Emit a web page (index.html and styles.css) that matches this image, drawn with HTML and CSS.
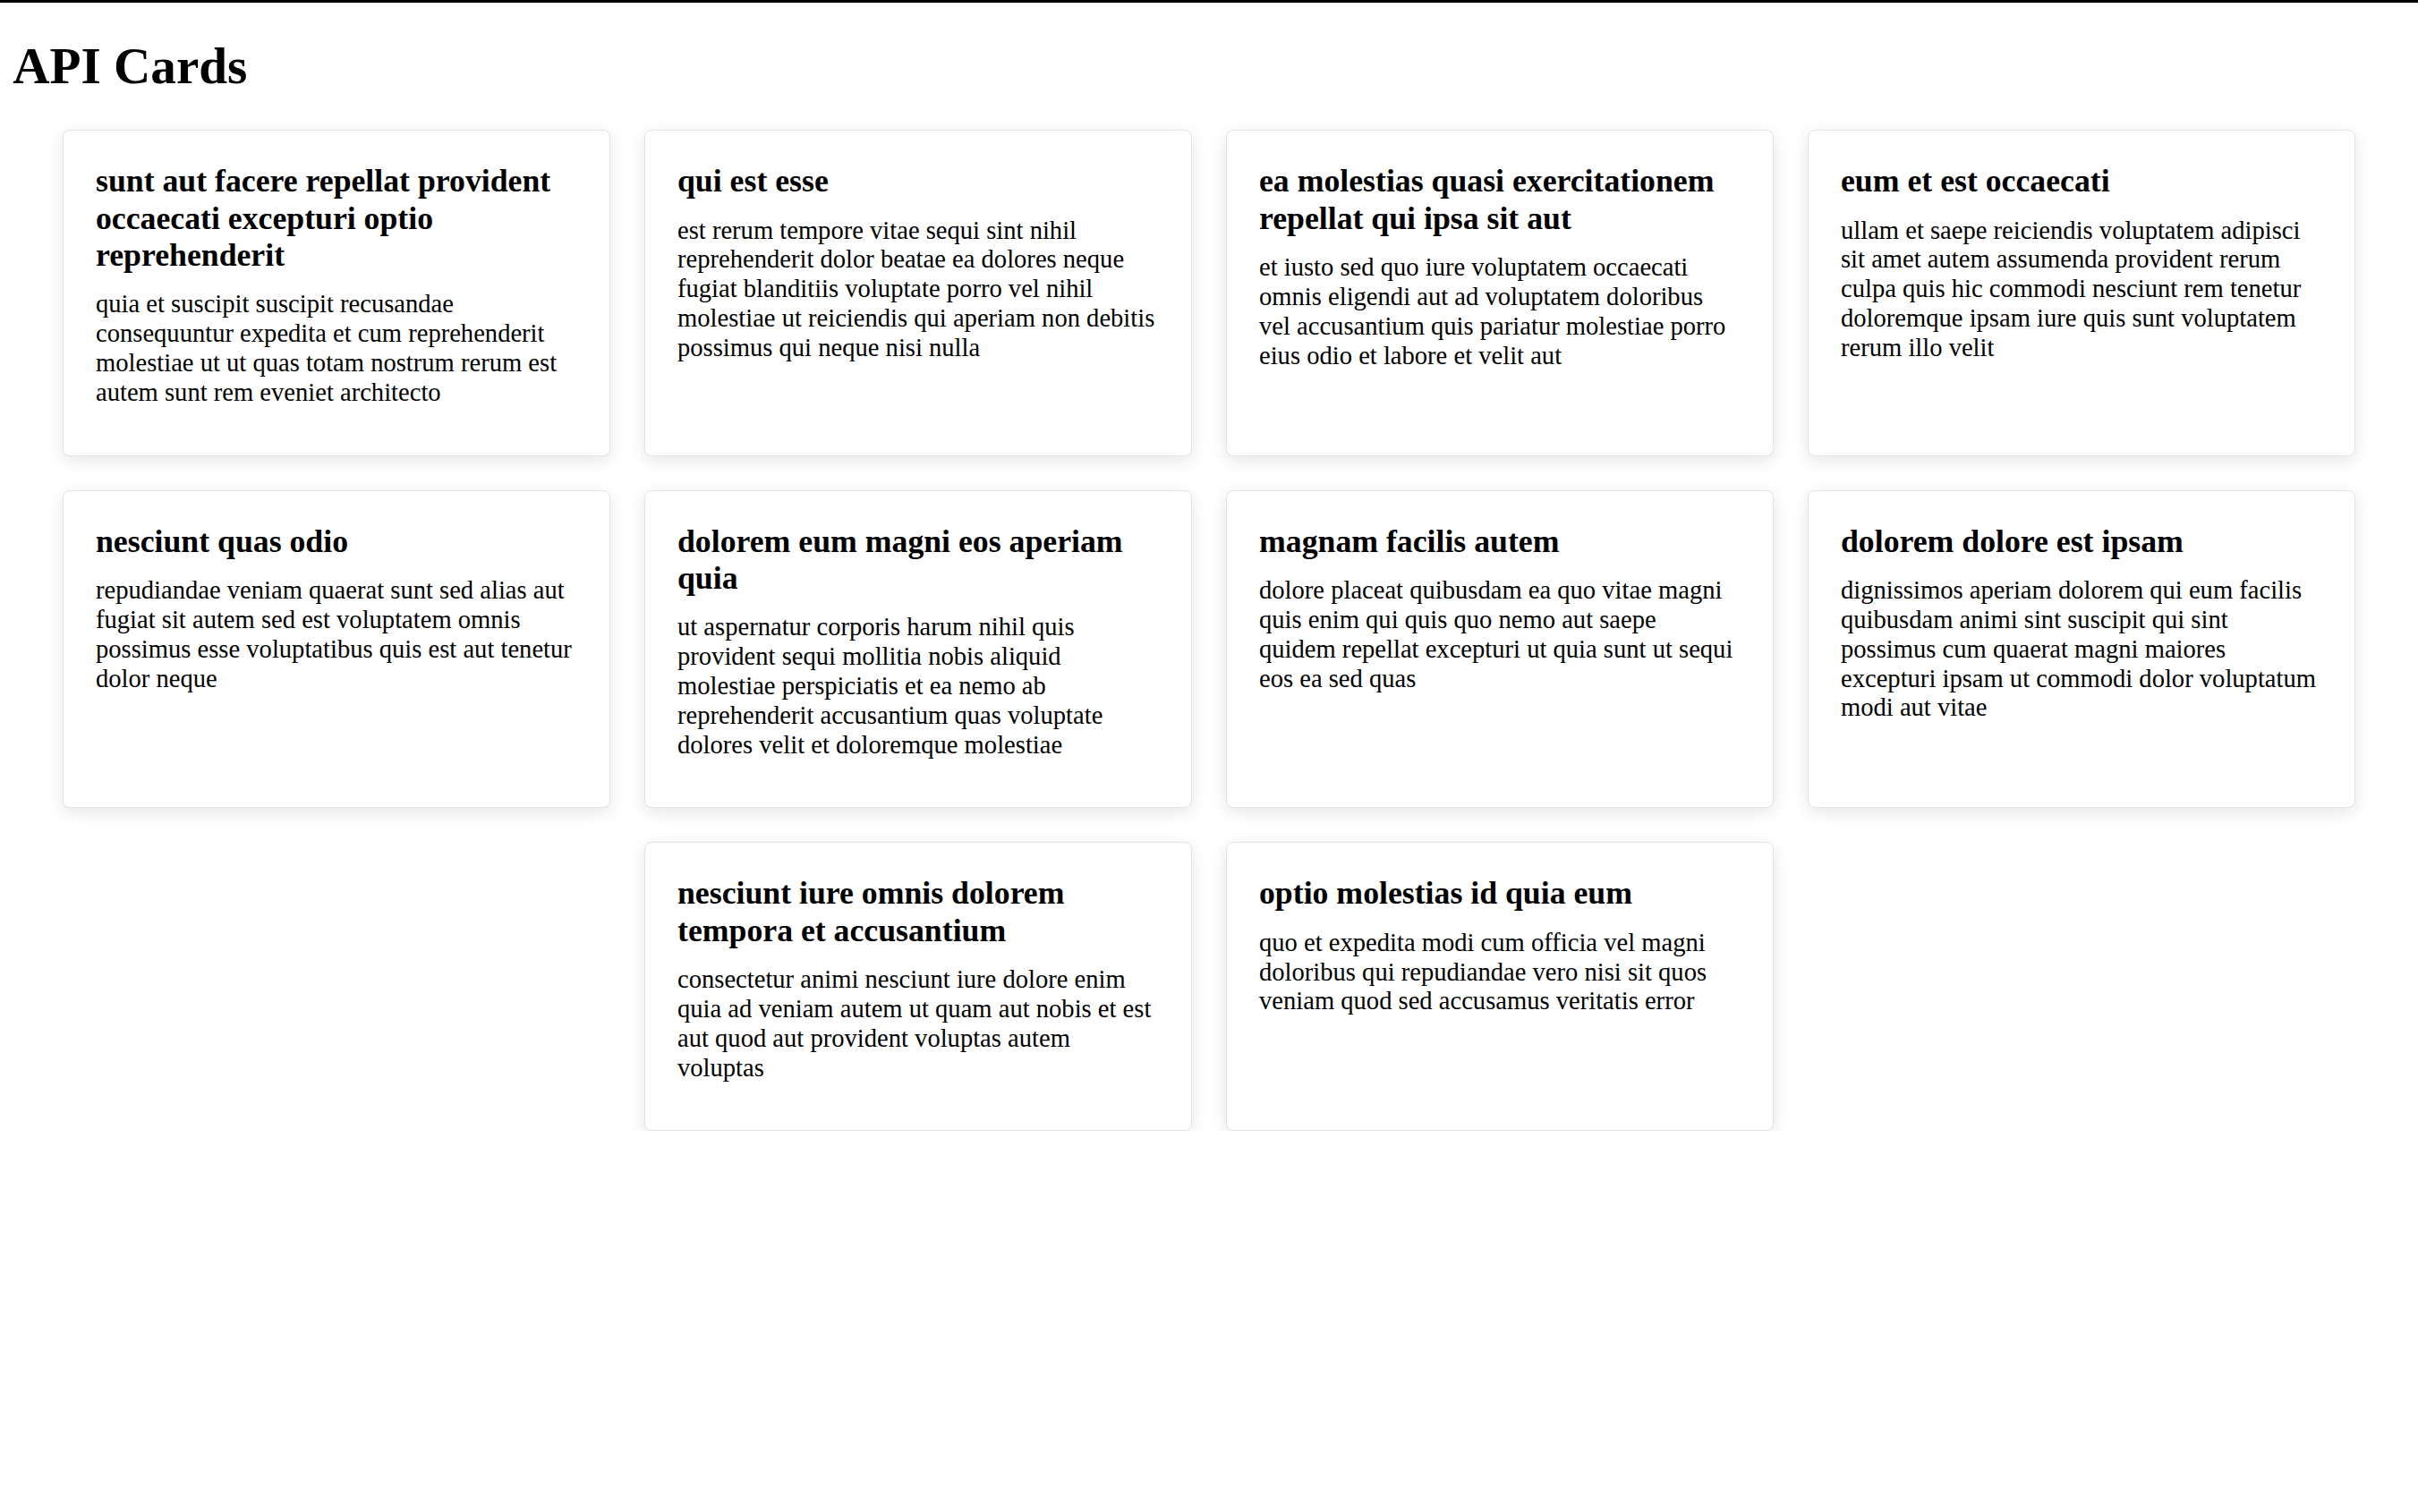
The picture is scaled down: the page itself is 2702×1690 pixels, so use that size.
FILE: index.html
```html
<!DOCTYPE html>
<html lang="en">
<head>
<meta charset="utf-8">
<title>API Cards</title>
<link rel="stylesheet" href="styles.css">
</head>
<body>
<h1 class="page-title">API Cards</h1>
<div class="cards">
  <div class="card">
    <h3 class="card-title">sunt aut facere repellat provident occaecati excepturi optio reprehenderit</h3>
    <p class="card-body">quia et suscipit suscipit recusandae consequuntur expedita et cum reprehenderit molestiae ut ut quas totam nostrum rerum est autem sunt rem eveniet architecto</p>
  </div>
  <div class="card">
    <h3 class="card-title">qui est esse</h3>
    <p class="card-body">est rerum tempore vitae sequi sint nihil reprehenderit dolor beatae ea dolores neque fugiat blanditiis voluptate porro vel nihil molestiae ut reiciendis qui aperiam non debitis possimus qui neque nisi nulla</p>
  </div>
  <div class="card">
    <h3 class="card-title">ea molestias quasi exercitationem repellat qui ipsa sit aut</h3>
    <p class="card-body">et iusto sed quo iure voluptatem occaecati omnis eligendi aut ad voluptatem doloribus vel accusantium quis pariatur molestiae porro eius odio et labore et velit aut</p>
  </div>
  <div class="card">
    <h3 class="card-title">eum et est occaecati</h3>
    <p class="card-body">ullam et saepe reiciendis voluptatem adipisci sit amet autem assumenda provident rerum culpa quis hic commodi nesciunt rem tenetur doloremque ipsam iure quis sunt voluptatem rerum illo velit</p>
  </div>
  <div class="card">
    <h3 class="card-title">nesciunt quas odio</h3>
    <p class="card-body">repudiandae veniam quaerat sunt sed alias aut fugiat sit autem sed est voluptatem omnis possimus esse voluptatibus quis est aut tenetur dolor neque</p>
  </div>
  <div class="card">
    <h3 class="card-title">dolorem eum magni eos aperiam quia</h3>
    <p class="card-body">ut aspernatur corporis harum nihil quis provident sequi mollitia nobis aliquid molestiae perspiciatis et ea nemo ab reprehenderit accusantium quas voluptate dolores velit et doloremque molestiae</p>
  </div>
  <div class="card">
    <h3 class="card-title">magnam facilis autem</h3>
    <p class="card-body">dolore placeat quibusdam ea quo vitae magni quis enim qui quis quo nemo aut saepe quidem repellat excepturi ut quia sunt ut sequi eos ea sed quas</p>
  </div>
  <div class="card">
    <h3 class="card-title">dolorem dolore est ipsam</h3>
    <p class="card-body">dignissimos aperiam dolorem qui eum facilis quibusdam animi sint suscipit qui sint possimus cum quaerat magni maiores excepturi ipsam ut commodi dolor voluptatum modi aut vitae</p>
  </div>
  <div class="card">
    <h3 class="card-title">nesciunt iure omnis dolorem tempora et accusantium</h3>
    <p class="card-body">consectetur animi nesciunt iure dolore enim quia ad veniam autem ut quam aut nobis et est aut quod aut provident voluptas autem voluptas</p>
  </div>
  <div class="card">
    <h3 class="card-title">optio molestias id quia eum</h3>
    <p class="card-body">quo et expedita modi cum officia vel magni doloribus qui repudiandae vero nisi sit quos veniam quod sed accusamus veritatis error</p>
  </div>
</div>
</body>
</html>
```

FILE: styles.css
```css
html {
  border-top: 3px solid #000;
  background: #fff;
}

body {
  margin: 0 14.3px 14.3px;
  font-family: "Liberation Serif", "Times New Roman", Times, serif;
  font-size: 28.59px;
  line-height: 32.9px;
  color: #000;
}

.page-title {
  font-size: 57.18px;
  line-height: 65.8px;
  font-weight: bold;
  margin: 38.3px 0;
}

.cards {
  display: flex;
  flex-wrap: wrap;
  justify-content: center;
  gap: 38px;
}

.card {
  box-sizing: border-box;
  width: 612px;
  padding: 36px 39px 36px 36px;
  background: #fff;
  border: 1px solid #e3e3e3;
  border-radius: 8px;
  box-shadow: 0 5px 18px rgba(0, 0, 0, 0.1);
}

.card-title {
  font-size: 35.74px;
  line-height: 41.3px;
  font-weight: bold;
  margin: 0 0 17.9px;
}

.card-body {
  margin: 0 0 16.8px;
}
```
